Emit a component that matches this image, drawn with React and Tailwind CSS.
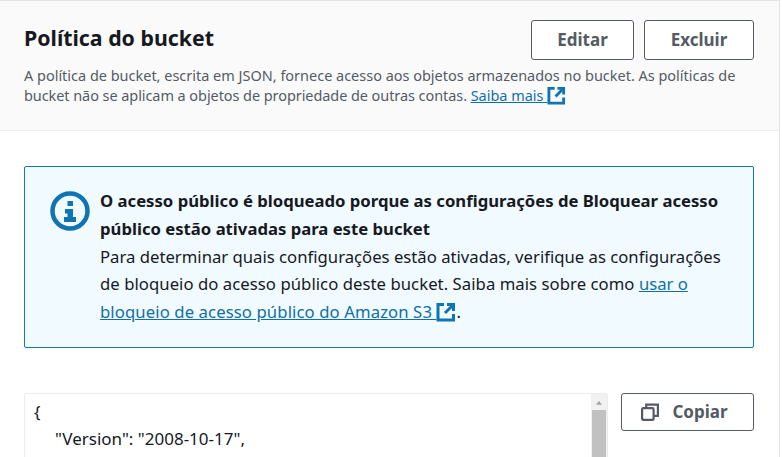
import React from 'react';

const ExternalIcon = ({ className }) => (
  <svg viewBox="0 0 20 20" className={className} fill="none" stroke="#0f74b4" strokeWidth="3">
    <path d="M8 2.5H2V18h15.5v-6" />
    <path d="M11 2.5h6.5V9" />
    <path d="M17 3l-8 8" />
  </svg>
);

const InfoIcon = () => (
  <svg viewBox="0 0 40 40" className="w-10 h-10 shrink-0" fill="none">
    <circle cx="20" cy="20" r="17.5" stroke="#0f74b4" strokeWidth="4.5" />
    <rect x="17.5" y="10" width="5.5" height="5" fill="#0f74b4" />
    <path d="M15 18h8v8h3v5H14v-5h3.5v-3.5H15z" fill="#0f74b4" />
  </svg>
);

const CopyIcon = () => (
  <svg viewBox="0 0 18 18" className="w-[18px] h-[18px]" fill="none" stroke="#545b64" strokeWidth="2.2">
    <rect x="1.1" y="5.1" width="11.5" height="11.8" rx="1.2" />
    <path d="M5.2 4.8V1.6h11.7v11.2h-3.8" />
  </svg>
);

const Button = ({ className, children }) => (
  <button className={`flex items-center justify-center gap-[13px] rounded-[3px] border border-[#545b64] bg-white text-[17px] font-bold text-[#545b64] ${className}`}>
    {children}
  </button>
);

const App = () => {
  return (
    <div className="h-[457px] w-[782px] overflow-hidden bg-white font-['Noto_Sans','Open_Sans',sans-serif] text-[#16191f]">
      <div className="w-[780px] h-full border-t border-r border-[#e5e5e5]">
        <div className="h-[130px] border-b border-[#eaeded] bg-[#fafafa] pl-6 pr-[25px] pt-[19px]">
          <div className="flex justify-between">
            <h2 className="pt-[1px] text-[21.3px] font-bold leading-[34px]">Política do bucket</h2>
            <div className="flex gap-[10px]">
              <Button className="h-10 w-[103px]">Editar</Button>
              <Button className="h-10 w-[110px]">Excluir</Button>
            </div>
          </div>
          <p className="mt-[6px] text-[14.47px] leading-[20px] text-[#545b64] whitespace-nowrap">
            A política de bucket, escrita em JSON, fornece acesso aos objetos armazenados no bucket. As políticas de
            <br />
            <span className="tracking-[-0.06px]">bucket não se aplicam a objetos de propriedade de outras contas. </span>
            <a className="text-[#0f6fa8] underline">
              Saiba mais <ExternalIcon className="inline-block w-[19px] h-[19px] align-[-4px]" />
            </a>
          </p>
        </div>

        <div className="pl-6 pr-[25px] pt-[35px]">
          <div className="flex h-[182px] gap-[11px] rounded-[2px] border border-[#0f7ea5] bg-[#f1faff] pl-[25px] pt-[24px]">
            <InfoIcon />
            <div className="text-[16.7px] leading-[27.75px] whitespace-nowrap -mt-[4px] -ml-[1px]">
              <div className="font-bold">
                O acesso público é bloqueado porque as configurações de Bloquear acesso
                <br />
                público estão ativadas para este bucket
              </div>
              <div>
                Para determinar quais configurações estão ativadas, verifique as configurações
                <br />
                <span className="tracking-[0.05px]">de bloqueio do acesso público deste bucket. Saiba mais sobre como </span>
                <a className="text-[#0f6fa8] underline">usar o</a>
                <br />
                <a className="text-[#0f6fa8] underline">
                  <span className="tracking-[0.1px]">bloqueio de acesso público do Amazon S3 </span>
                  <ExternalIcon className="inline-block w-[20px] h-[20px] align-[-4px]" />
                </a>
                .
              </div>
            </div>
          </div>

          <div className="mt-[45px] flex gap-[13px]">
            <div className="flex h-[70px] w-[584px] rounded-t-[2px] border border-[#eaeded] bg-white">
              <div className="flex-1 pl-[9px] pt-[4px] text-[17px] leading-[27px] text-[#16191f]">
                <div>{'{'}</div>
                <div className="pl-[21px]">"Version": "2008-10-17",</div>
              </div>
              <div className="flex w-[16px] flex-col items-center bg-[#f1f1f1]">
                <svg viewBox="0 0 8 5" className="mt-[7px] w-[8px] h-[5px]">
                  <path d="M4 0l4 5H0z" fill="#a3a3a3" />
                </svg>
                <div className="mt-[5px] h-full w-[14px] bg-[#c1c1c1]" />
              </div>
            </div>
            <Button className="h-[38px] w-[133px] pr-[6px]">
              <CopyIcon />
              Copiar
            </Button>
          </div>
        </div>
      </div>
    </div>
  );
};

export default App;
